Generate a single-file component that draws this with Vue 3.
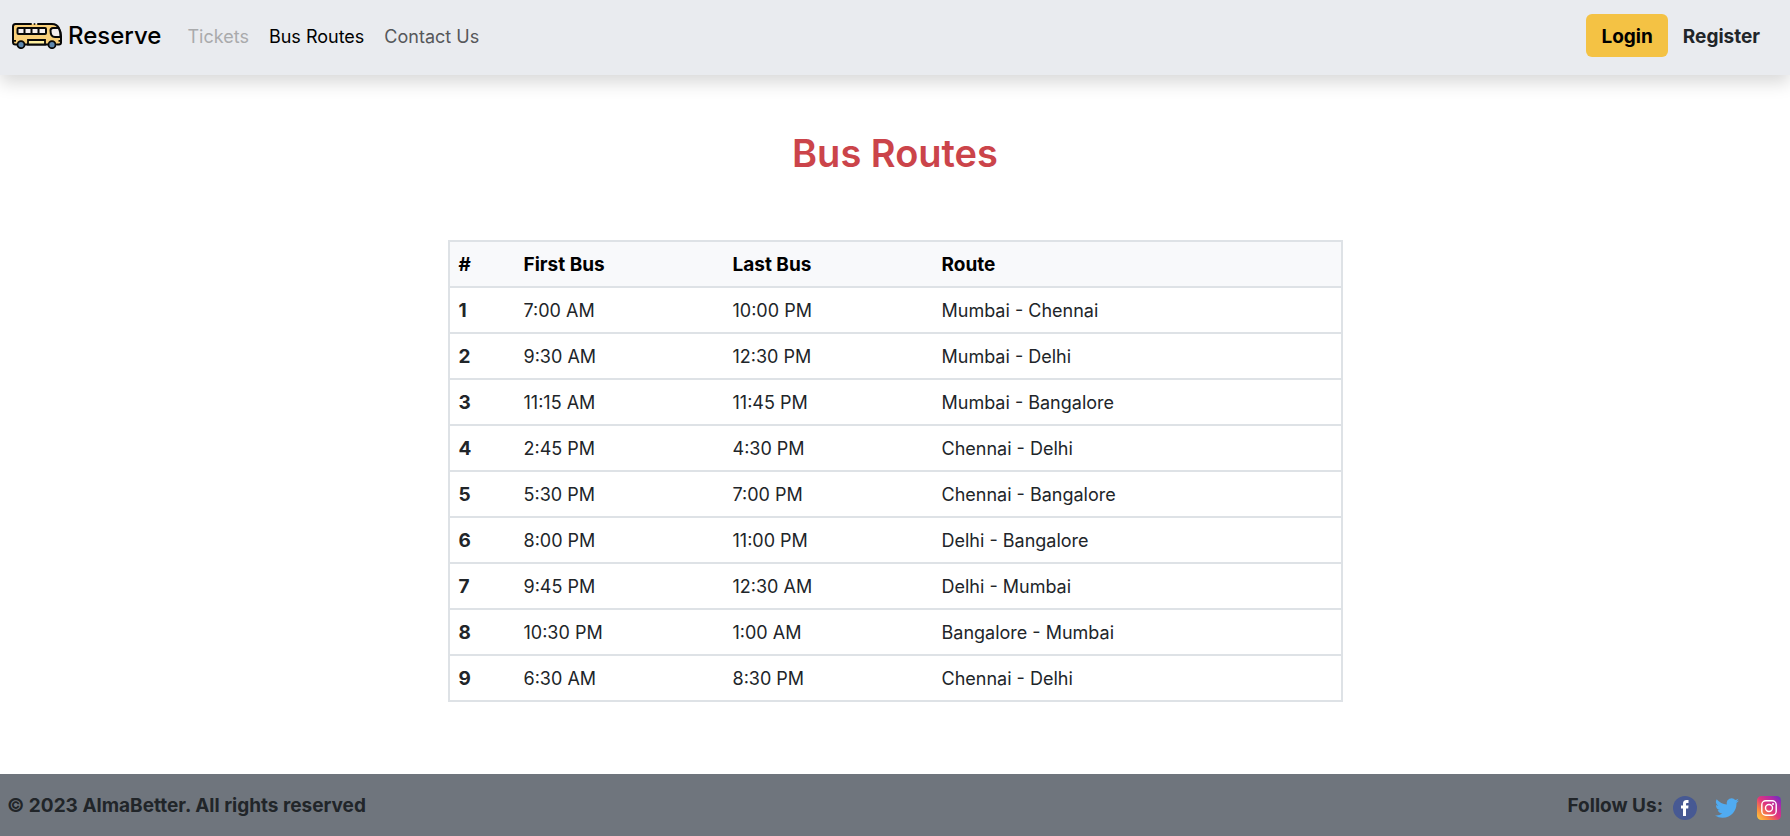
<script setup>
const links = [
  { label: 'Tickets', state: 'muted' },
  { label: 'Bus Routes', state: 'active' },
  { label: 'Contact Us', state: 'plain' },
]

const routes = [
  { first: '7:00 AM', last: '10:00 PM', route: 'Mumbai - Chennai' },
  { first: '9:30 AM', last: '12:30 PM', route: 'Mumbai - Delhi' },
  { first: '11:15 AM', last: '11:45 PM', route: 'Mumbai - Bangalore' },
  { first: '2:45 PM', last: '4:30 PM', route: 'Chennai - Delhi' },
  { first: '5:30 PM', last: '7:00 PM', route: 'Chennai - Bangalore' },
  { first: '8:00 PM', last: '11:00 PM', route: 'Delhi - Bangalore' },
  { first: '9:45 PM', last: '12:30 AM', route: 'Delhi - Mumbai' },
  { first: '10:30 PM', last: '1:00 AM', route: 'Bangalore - Mumbai' },
  { first: '6:30 AM', last: '8:30 PM', route: 'Chennai - Delhi' },
]
</script>

<template>
  <div class="page">
    <header class="navbar">
      <a class="brand" href="#">
        <svg class="bus" viewBox="0 0 50 26" aria-hidden="true">
          <path d="M3.5 1H40q4 0 5.500 3.500L49 15v7H1V3.500Q1 1 3.500 1Z" fill="#f9d07a" />
          <path d="M19 1H3.500Q1 1 1 3.500V19q0 2.500 2.500 2.500H5M13 21.500h23M45 21.500h2q2 0 2-2V13q0-4-2-7.500Q45 1 40 1H26" fill="none" stroke="#080808" stroke-width="2" stroke-linecap="round" />
          <path d="M22.500.2v1.600" stroke="#080808" stroke-width="1.600" />
          <rect x="5.500" y="5" width="28.500" height="6" rx="1" fill="#f6f0ee" stroke="#080808" stroke-width="2" />
          <path d="M12.500 5v6M19.500 5v6M26.500 5v6" stroke="#080808" stroke-width="2" />
          <path d="M46.500 5H41q-2.500 0-2.500 2.500Q38.500 14 43 14h5.500Q48.500 8 46.500 5Z" fill="#f6f0ee" stroke="#080808" stroke-width="2" />
          <path d="M16 21.500v-4.500h17v4.500Z" fill="#fff0a0" stroke="#080808" stroke-width="1.800" />
          <path d="M1.500 17.800H4M46.500 17.800H49" stroke="#080808" stroke-width="1.800" />
          <circle cx="9" cy="21.700" r="3.500" fill="#5f88ae" stroke="#080808" stroke-width="1.800" />
          <circle cx="40" cy="21.700" r="3.500" fill="#5f88ae" stroke="#080808" stroke-width="1.800" />
        </svg>
        <span>Reserve</span>
      </a>
      <nav class="links" aria-label="Main">
        <a v-for="link in links" :key="link.label" href="#" :class="link.state">{{ link.label }}</a>
      </nav>
      <div class="account">
        <button type="button" class="login">Login</button>
        <button type="button" class="register">Register</button>
      </div>
    </header>

    <main>
      <h1>Bus Routes</h1>
      <table>
        <thead>
          <tr>
            <th class="num" scope="col">#</th>
            <th class="time" scope="col">First Bus</th>
            <th class="time" scope="col">Last Bus</th>
            <th scope="col">Route</th>
          </tr>
        </thead>
        <tbody>
          <tr v-for="(row, i) in routes" :key="i">
            <th scope="row">{{ i + 1 }}</th>
            <td>{{ row.first }}</td>
            <td>{{ row.last }}</td>
            <td>{{ row.route }}</td>
          </tr>
        </tbody>
      </table>
    </main>

    <footer>
      <span>© 2023 AlmaBetter. All rights reserved</span>
      <div class="follow">
        <span>Follow Us:</span>
        <div class="social">
          <a href="#" aria-label="Facebook">
            <svg viewBox="0 0 24 24" aria-hidden="true">
              <circle cx="12" cy="12" r="12" fill="#475993" />
              <path d="M10 20v-7.500H8V9.400h2V7.700C10 5.200 11.300 4 13.500 4H15.500v3H14.200c-.9 0-1.200.4-1.200 1.200v1.200h2.500l-.3 3.100H13V20Z" fill="#fff" />
            </svg>
          </a>
          <a href="#" aria-label="Twitter">
            <svg viewBox="0 0 24 24" aria-hidden="true">
              <path d="M24 4.600c-.9.400-1.800.7-2.800.8a4.900 4.900 0 0 0 2.200-2.700c-1 .6-2 1-3.100 1.200a4.900 4.900 0 0 0-8.400 4.500A14 14 0 0 1 1.700 3.200a4.900 4.900 0 0 0 1.500 6.500c-.8 0-1.600-.2-2.200-.6v.1a4.900 4.900 0 0 0 3.900 4.800c-.7.200-1.500.2-2.200.1a4.900 4.900 0 0 0 4.600 3.400A9.900 9.900 0 0 1 0 19.500a14 14 0 0 0 7.500 2.200c9.100 0 14-7.500 14-14v-.6c1-.7 1.800-1.600 2.500-2.500Z" fill="#50abf1" />
            </svg>
          </a>
          <a href="#" aria-label="Instagram">
            <svg viewBox="0 0 24 24" aria-hidden="true">
              <defs>
                <linearGradient id="insta" x1="0" y1="1" x2="1" y2="0">
                  <stop offset="0" stop-color="#ffd23f" />
                  <stop offset=".25" stop-color="#f9893f" />
                  <stop offset=".5" stop-color="#e0357c" />
                  <stop offset=".75" stop-color="#b42aa5" />
                  <stop offset="1" stop-color="#6130c4" />
                </linearGradient>
              </defs>
              <rect width="24" height="24" rx="4.500" fill="url(#insta)" />
              <rect x="4.800" y="4.800" width="14.400" height="14.400" rx="4" fill="none" stroke="#fff" stroke-width="1.400" />
              <circle cx="12" cy="12" r="3.500" fill="none" stroke="#fff" stroke-width="1.400" />
              <circle cx="16" cy="8" r="1" fill="#fff" />
            </svg>
          </a>
        </div>
      </div>
    </footer>
  </div>
</template>

<style>
body {
  margin: 0;
  background: #fff;
}
</style>

<style scoped>
.page {
  display: flex;
  flex-direction: column;
  min-height: 100vh;
  box-sizing: border-box;
  font-family: Inter, "Liberation Sans", sans-serif;
  font-size: 18px;
  line-height: 28px;
  color: #212529;
}

a {
  color: inherit;
  text-decoration: none;
}

.navbar {
  display: flex;
  align-items: flex-start;
  padding: 14px 15px 18px 12px;
  background: #e9ebef;
  box-shadow: 0 8px 16px rgba(0, 0, 0, 0.15);
}

.brand {
  display: flex;
  align-items: center;
  gap: 6px;
  height: 43px;
  font-size: 24px;
  font-weight: 500;
  color: #000;
}

.bus {
  width: 50px;
  height: 26px;
}

.links {
  display: flex;
  gap: 20px;
  margin-left: 26px;
  padding-top: 9px;
}

.muted {
  color: #a9aaac;
}

.active {
  color: #000;
}

.plain {
  color: #56575a;
}

.account {
  display: flex;
  margin-left: auto;
}

button {
  height: 43px;
  padding: 2px 15px 0;
  border: 0;
  border-radius: 6px;
  background: transparent;
  font: inherit;
  font-size: 19px;
  font-weight: 700;
  color: inherit;
  cursor: pointer;
}

.login {
  background: #f4c244;
  color: #000;
}

main {
  flex: 1;
}

h1 {
  margin: 54px 0 63px;
  font-size: 38px;
  line-height: 48px;
  font-weight: 600;
  text-align: center;
  color: #cb444a;
}

table {
  width: 50%;
  margin: 0 auto;
  border: 2px solid #dee2e6;
  border-collapse: collapse;
  table-layout: fixed;
}

th,
td {
  padding: 9px 9px 7px;
  text-align: left;
}

th {
  font-size: 19px;
  font-weight: 700;
}

tr {
  border-bottom: 2px solid #dee2e6;
}

thead {
  background: #f8f9fb;
  color: #000;
}

.num {
  width: 47px;
}

.time {
  width: 191px;
}

footer {
  display: flex;
  align-items: center;
  justify-content: space-between;
  box-sizing: border-box;
  min-height: 62px;
  padding: 2px 9px 0 7px;
  background: #6f757d;
  font-size: 19px;
  font-weight: 700;
}

.follow {
  display: flex;
  align-items: center;
  gap: 10px;
}

.social {
  display: flex;
  gap: 18px;
  padding-top: 4px;
}

.social svg {
  display: block;
  width: 24px;
  height: 24px;
}
</style>
